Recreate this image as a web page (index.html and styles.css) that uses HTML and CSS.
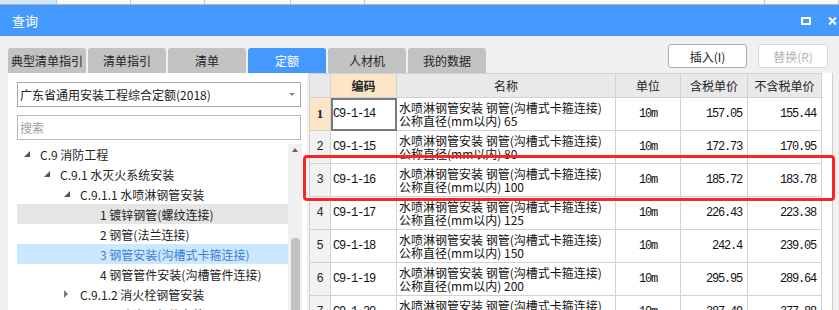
FILE: index.html
```html
<!DOCTYPE html>
<html lang="zh-CN">
<head>
    <meta charset="UTF-8">
    <title>查询</title>
    <link rel="stylesheet" href="styles.css">
</head>
<body>
    <div class="back-strip">
        <span class="cell active"></span>
        <span class="cell w80"></span>
        <span class="cell w80"></span>
        <span class="cell w92"></span>
        <span class="cell w80"></span>
        <span class="cell w433"></span>
        <span class="cell"></span>
    </div>
    <div class="titlebar">
        <span class="title">查询</span>
        <div class="win-btns">
            <svg width="10" height="8" viewBox="0 0 10 8"><rect x="1" y="1" width="8" height="6" fill="none" stroke="#fff" stroke-width="2"/></svg>
            <svg width="9" height="8" viewBox="0 0 9 8"><path d="M1 0.5 L8 7.5 M8 0.5 L1 7.5" stroke="#fff" stroke-width="2"/></svg>
        </div>
    </div>
    <div class="toolbar">
        <div class="tabs">
            <span class="tab">典型清单指引</span>
            <span class="tab">清单指引</span>
            <span class="tab">清单</span>
            <span class="tab current">定额</span>
            <span class="tab">人材机</span>
            <span class="tab">我的数据</span>
        </div>
        <div class="actions">
            <button class="btn btn-insert">插入(I)</button>
            <button class="btn btn-replace" disabled>替换(R)</button>
        </div>
    </div>
    <div class="main">
        <div class="side">
            <div class="select">
                <span>广东省通用安装工程综合定额(2018)</span>
                <span class="caret"></span>
            </div>
            <input class="search" type="text" placeholder="搜索">
            <div class="tree-wrap">
                <ul class="tree">
                    <li class="node l0"><span class="tog"><svg width="6" height="6"><polygon points="6,0 6,6 0,6" fill="#555"/></svg></span>C.9 消防工程</li>
                    <li class="node l1"><span class="tog"><svg width="6" height="6"><polygon points="6,0 6,6 0,6" fill="#555"/></svg></span>C.9.1 水灭火系统安装</li>
                    <li class="node l2"><span class="tog"><svg width="6" height="6"><polygon points="6,0 6,6 0,6" fill="#555"/></svg></span>C.9.1.1 水喷淋钢管安装</li>
                    <li class="node l3 hover">1 镀锌钢管(螺纹连接)</li>
                    <li class="node l3">2 钢管(法兰连接)</li>
                    <li class="node l3 selected">3 钢管安装(沟槽式卡箍连接)</li>
                    <li class="node l3">4 钢管管件安装(沟槽管件连接)</li>
                    <li class="node l2"><span class="tog"><svg width="5" height="8"><polygon points="0,0 4,4 0,8" fill="#777"/></svg></span>C.9.1.2 消火栓钢管安装</li>
                    <li class="node l2"><span class="tog"><svg width="5" height="8"><polygon points="0,0 4,4 0,8" fill="#777"/></svg></span>C.9.1.3 喷头及部件安装</li>
                </ul>
                <div class="vscroll">
                    <span class="up"></span>
                    <div class="thumb"></div>
                </div>
            </div>
        </div>
        <div class="grid-wrap">
            <table class="grid">
                <colgroup>
                    <col style="width:21px"><col style="width:66px"><col style="width:219px">
                    <col style="width:65px"><col style="width:67px"><col style="width:74px">
                </colgroup>
                <thead>
                    <tr>
                        <th></th>
                        <th class="sorted">编码</th>
                        <th>名称</th>
                        <th>单位</th>
                        <th>含税单价</th>
                        <th>不含税单价</th>
                    </tr>
                </thead>
                <tbody>
                    <tr>
                        <td class="num cur">1</td>
                        <td class="code focus">C9-1-14</td>
                        <td class="name">水喷淋钢管安装 钢管(沟槽式卡箍连接)<br>公称直径(mm以内) 65</td>
                        <td class="unit">10m</td>
                        <td class="price">157.05</td>
                        <td class="price">155.44</td>
                    </tr>
                    <tr>
                        <td class="num">2</td>
                        <td class="code">C9-1-15</td>
                        <td class="name">水喷淋钢管安装 钢管(沟槽式卡箍连接)<br>公称直径(mm以内) 80</td>
                        <td class="unit">10m</td>
                        <td class="price">172.73</td>
                        <td class="price">170.95</td>
                    </tr>
                    <tr>
                        <td class="num">3</td>
                        <td class="code">C9-1-16</td>
                        <td class="name">水喷淋钢管安装 钢管(沟槽式卡箍连接)<br>公称直径(mm以内) 100</td>
                        <td class="unit">10m</td>
                        <td class="price">185.72</td>
                        <td class="price">183.78</td>
                    </tr>
                    <tr>
                        <td class="num">4</td>
                        <td class="code">C9-1-17</td>
                        <td class="name">水喷淋钢管安装 钢管(沟槽式卡箍连接)<br>公称直径(mm以内) 125</td>
                        <td class="unit">10m</td>
                        <td class="price">226.43</td>
                        <td class="price">223.38</td>
                    </tr>
                    <tr>
                        <td class="num">5</td>
                        <td class="code">C9-1-18</td>
                        <td class="name">水喷淋钢管安装 钢管(沟槽式卡箍连接)<br>公称直径(mm以内) 150</td>
                        <td class="unit">10m</td>
                        <td class="price">242.4</td>
                        <td class="price">239.05</td>
                    </tr>
                    <tr>
                        <td class="num">6</td>
                        <td class="code">C9-1-19</td>
                        <td class="name">水喷淋钢管安装 钢管(沟槽式卡箍连接)<br>公称直径(mm以内) 200</td>
                        <td class="unit">10m</td>
                        <td class="price">295.95</td>
                        <td class="price">289.64</td>
                    </tr>
                    <tr>
                        <td class="num">7</td>
                        <td class="code">C9-1-20</td>
                        <td class="name">水喷淋钢管安装 钢管(沟槽式卡箍连接)<br>公称直径(mm以内) 250</td>
                        <td class="unit">10m</td>
                        <td class="price">387.49</td>
                        <td class="price">377.88</td>
                    </tr>
                </tbody>
            </table>
        </div>
    </div>
    <div class="mark"></div>
</body>
</html>
```
FILE: styles.css
```css
body, html {
    margin: 0;
    padding: 0;
    width: 100%;
    height: 100%;
    overflow: hidden;
}
body {
    background: #f0f0f0;
    font-family: "Noto Sans CJK SC", "Liberation Sans", sans-serif;
    font-size: 12px;
    color: #222;
    position: relative;
}
.back-strip {
    display: flex;
    height: 4px;
    background: #f9f9f9;
    border-bottom: 1px solid #b4b4b4;
}
.back-strip .cell {
    width: 79px;
    border-right: 1px solid #cacaca;
}
.back-strip .cell.active {
    width: 61px;
    background: #d3e7fb;
}
.back-strip .w92 {
    width: 91px;
}
.back-strip .w433 {
    width: 432px;
}
.titlebar {
    height: 31px;
    background: #4499ff;
    display: flex;
    align-items: center;
    padding: 0 2px 0 12px;
    color: #fff;
}
.title {
    font-size: 13px;
}
.win-btns {
    margin-left: auto;
    display: flex;
    align-items: center;
    gap: 17px;
}
.toolbar {
    height: 37px;
    display: flex;
    padding-left: 8px;
}
.tabs {
    display: flex;
    gap: 2px;
    align-self: flex-end;
}
.tab {
    width: 78px;
    height: 25px;
    background: #c2c2c2;
    border-radius: 3px 3px 0 0;
    display: flex;
    align-items: center;
    justify-content: center;
    color: #222;
}
.tab.current {
    background: #4499ff;
    color: #fff;
}
.actions {
    margin-left: auto;
    margin-top: 8px;
    margin-right: 11px;
    display: flex;
    gap: 11px;
}
.btn {
    height: 24px;
    background: #fff;
    border: 1px solid #adadad;
    border-radius: 3px;
    font-family: "Noto Sans CJK SC", "Liberation Sans", sans-serif;
    font-size: 12px;
    color: #222;
    padding: 0;
}
.btn-insert {
    width: 79px;
}
.btn-replace {
    width: 70px;
    border-color: #d6d6d6;
    color: #b4b4b4;
}
.main {
    display: flex;
    height: 237px;
    overflow: hidden;
}
.side {
    width: 285px;
    margin-left: 8px;
    background: #fff;
    padding: 9px 5px 0 9px;
    display: flex;
    flex-direction: column;
}
.select {
    width: 284px;
    height: 25px;
    box-sizing: border-box;
    border: 1px solid #a8a8a8;
    display: flex;
    align-items: center;
    padding-left: 2px;
    font-size: 12px;
}
.caret {
    margin-left: auto;
    margin-right: 5px;
    border-left: 3px solid transparent;
    border-right: 3px solid transparent;
    border-top: 3px solid #888;
}
.search {
    width: 284px;
    height: 25px;
    box-sizing: border-box;
    margin: 8px 0 0;
    border: 1px solid #b8b8b8;
    padding: 0 2px;
    font-family: "Noto Sans CJK SC", "Liberation Sans", sans-serif;
    font-size: 12px;
    outline: none;
}
.search::placeholder {
    color: #a0a0a0;
}
.tree-wrap {
    flex: 1;
    display: flex;
    margin-top: 4px;
    min-height: 0;
}
.tree {
    list-style: none;
    margin: 0;
    padding: 0;
    flex: 1;
}
.node {
    height: 20px;
    display: flex;
    align-items: center;
    white-space: nowrap;
}
.node.l0 { padding-left: 7px; }
.node.l1 { padding-left: 27px; }
.node.l2 { padding-left: 47px; }
.node.l3 { padding-left: 83px; }
.tog {
    width: 16px;
    display: flex;
    align-items: center;
}
.node.hover {
    background: #e5e5e5;
}
.node.selected {
    background: #cce8ff;
    color: #3b7fd9;
}
.vscroll {
    width: 14px;
    background: #f0f0f0;
    display: flex;
    flex-direction: column;
    align-items: center;
}
.vscroll .up {
    margin-top: 4px;
    border-left: 3px solid transparent;
    border-right: 3px solid transparent;
    border-bottom: 4px solid #666;
}
.vscroll .thumb {
    width: 9px;
    margin-top: 86px;
    flex: 1;
    background: #c1c1c1;
    border-radius: 4px 4px 0 0;
}
.grid-wrap {
    flex: 1;
    margin-left: 2px;
    margin-right: 6px;
    background: #fff;
    border-right: 1px solid #cfcfcf;
    overflow: hidden;
}
.grid {
    border-collapse: collapse;
    table-layout: fixed;
    width: 513px;
}
.grid th, .grid td {
    border: 1px solid #d2d2d2;
    padding: 0;
    overflow: hidden;
    white-space: nowrap;
    vertical-align: middle;
}
.grid th {
    height: 23px;
    background: #e9e9e9;
    font-weight: normal;
    font-size: 12px;
    color: #222;
}
.grid th.sorted {
    background: #fde5c8;
    font-weight: bold;
}
.grid td {
    height: 32px;
}
.grid .num {
    background: #f2f2f2;
    text-align: center;
    font-family: "Liberation Mono", monospace;
    font-size: 12px;
}
.grid .num.cur {
    background: #fde5c8;
    font-family: "Liberation Serif", serif;
    font-weight: bold;
    font-size: 13px;
}
.grid .code,
.grid .unit,
.grid .price {
    font-family: "Liberation Mono", monospace;
    font-size: 12px;
    letter-spacing: -1.2px;
    color: #111;
}
.grid .code {
    padding-left: 2px;
}
.grid .code.focus {
    outline: 2px solid #7a7a7a;
    outline-offset: -2px;
}
.grid .name {
    padding-left: 2px;
    line-height: 13px;
    color: #111;
}
.grid .unit {
    text-align: center;
}
.grid .price {
    text-align: right;
    padding-right: 5px;
}
.mark {
    position: absolute;
    left: 303px;
    top: 155px;
    width: 532px;
    height: 46px;
    box-sizing: border-box;
    border: 3px solid #fb2424;
    border-radius: 4px;
    pointer-events: none;
}
```
